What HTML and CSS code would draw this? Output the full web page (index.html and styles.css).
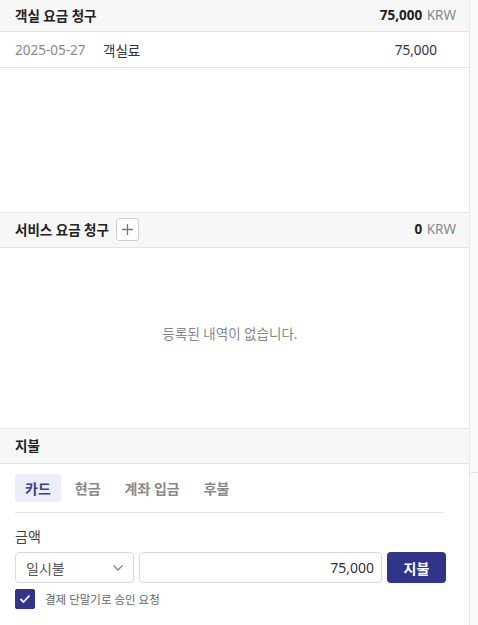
FILE: index.html
```html
<!DOCTYPE html>
<html lang="ko">
<head>
<meta charset="utf-8">
<link rel="stylesheet" href="styles.css">
</head>
<body>
<div class="layout">
  <div class="panel">
    <div class="sec-head">
      <span class="sec-title">객실 요금 청구</span>
      <span class="total"><b>75,000</b> <span class="cur">KRW</span></span>
    </div>
    <div class="row">
      <span class="date">2025-05-27</span>
      <span class="item">객실료</span>
      <span class="amt">75,000</span>
    </div>
    <div class="blank1"></div>
    <div class="sec-head tall bt">
      <span class="sec-title">서비스 요금 청구
        <span class="add-btn"><svg width="13" height="13" viewBox="0 0 13 13"><path d="M6.5 1v11M1 6.5h11" stroke="#777" stroke-width="1.3" fill="none"/></svg></span>
      </span>
      <span class="total"><b>0</b> <span class="cur">KRW</span></span>
    </div>
    <div class="empty">등록된 내역이 없습니다.</div>
    <div class="sec-head tall bt">
      <span class="sec-title">지불</span>
    </div>
    <div class="pay">
      <div class="tabs">
        <span class="tab active">카드</span>
        <span class="tab">현금</span>
        <span class="tab">계좌 입금</span>
        <span class="tab">후불</span>
      </div>
      <div class="label">금액</div>
      <div class="controls">
        <div class="select">일시불
          <svg width="12" height="8" viewBox="0 0 12 8"><path d="M1.5 1.5l4.5 4.5 4.5-4.5" stroke="#888" stroke-width="1.4" fill="none"/></svg>
        </div>
        <div class="input">75,000</div>
        <div class="btn">지불</div>
      </div>
      <label class="check">
        <span class="box"><svg width="12" height="10" viewBox="0 0 12 10"><path d="M1.5 5l3 3 6-6.5" stroke="#fff" stroke-width="1.8" fill="none"/></svg></span>
        결제 단말기로 승인 요청
      </label>
    </div>
  </div>
  <div class="side">
    <div class="side-top"></div>
  </div>
</div>
</body>
</html>
```

FILE: styles.css
```css
html, body {
  margin: 0;
  padding: 0;
  background: #fff;
}
body {
  font-family: "Noto Sans", "Noto Sans CJK KR", sans-serif;
  color: #222;
  font-size: 13.5px;
}
.layout {
  display: flex;
  height: 625px;
  overflow: hidden;
}
.panel {
  width: 469px;
  border-right: 1px solid #e6e6e6;
  flex: none;
}
.side {
  flex: 1;
  background: #fafafa;
}
.side-top {
  height: 472px;
  border-bottom: 1px solid #e4e4e4;
}
.sec-head {
  background: #f7f7f7;
  border-bottom: 1px solid #e4e4e4;
  display: flex;
  align-items: center;
  justify-content: space-between;
  padding: 0 13px 2px 15px;
  box-sizing: content-box;
  height: 29px;
}
.sec-head.tall {
  height: 32px;
  padding-bottom: 2px;
}
.bt {
  border-top: 1px solid #e4e4e4;
}
.sec-title {
  font-weight: 700;
  font-size: 13.5px;
  color: #222;
  display: flex;
  align-items: center;
  gap: 7px;
}
.total b {
  font-weight: 700;
  color: #222;
}
.cur {
  color: #888;
  margin-left: 1px;
}
.add-btn {
  width: 21px;
  height: 21px;
  border: 1px solid #cfcfcf;
  border-radius: 3px;
  background: #fff;
  display: inline-flex;
  align-items: center;
  justify-content: center;
}
.row {
  height: 35px;
  border-bottom: 1px solid #e4e4e4;
  display: flex;
  align-items: center;
  padding: 0 32px 0 15px;
}
.date {
  color: #8a8a8a;
  width: 88px;
}
.item {
  color: #333;
  flex: 1;
}
.amt {
  color: #333;
}
.blank1 {
  height: 144px;
}
.empty {
  height: 180px;
  display: flex;
  align-items: center;
  justify-content: center;
  padding-right: 9px;
  padding-bottom: 10px;
  box-sizing: border-box;
  font-size: 13.5px;
  color: #888;
}
.pay {
  padding: 10px 23px 0 15px;
}
.tabs {
  display: flex;
  gap: 4px;
  border-bottom: 1px solid #e2e2e2;
  padding-bottom: 10px;
  margin-right: 2px;
}
.tab {
  padding: 0 10px;
  height: 28px;
  display: flex;
  align-items: center;
  border-radius: 3px;
  color: #888;
  font-weight: 600;
  font-size: 14px;
}
.tab.active {
  background: #eceefb;
  color: #3a3e90;
}
.label {
  margin-top: 14px;
  font-size: 14px;
  color: #444;
  line-height: 19px;
}
.controls {
  display: flex;
  gap: 5px;
  margin-top: 6px;
  height: 31px;
  font-size: 14px;
}
.select {
  width: 119px;
  box-sizing: border-box;
  border: 1px solid #dadada;
  border-radius: 4px;
  display: flex;
  align-items: center;
  justify-content: space-between;
  padding: 0 9px 0 10px;
  color: #555;
}
.input {
  flex: 1;
  border: 1px solid #dadada;
  border-radius: 4px;
  display: flex;
  align-items: center;
  justify-content: flex-end;
  padding: 0 7px;
  color: #333;
}
.btn {
  width: 59px;
  background: #31358a;
  color: #fff;
  border-radius: 4px;
  display: flex;
  align-items: center;
  justify-content: center;
  font-weight: 600;
}
.check {
  display: flex;
  align-items: center;
  gap: 10px;
  margin-top: 6px;
  font-size: 11.5px;
  color: #666;
}
.box {
  width: 20px;
  height: 20px;
  background: #31358a;
  border-radius: 2px;
  display: flex;
  align-items: center;
  justify-content: center;
}
```
